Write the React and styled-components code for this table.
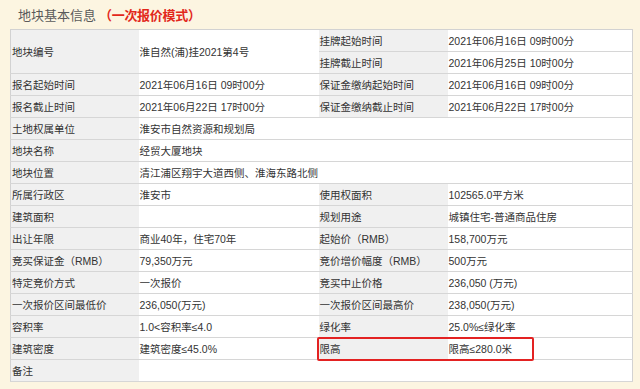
import styled, { createGlobalStyle } from "styled-components";

const GlobalStyle = createGlobalStyle`
  html, body {
    margin: 0;
    padding: 0;
    background: #fcf5e1;
  }
  body {
    font-family: "Liberation Sans", "Noto Sans CJK SC", sans-serif;
    color: #333;
  }
`;

const StyledPage = styled.div`
  width: 640px;
  height: 389px;
  padding: 0 0 0 10px;
  box-sizing: border-box;
  overflow: hidden;
`;

const StyledTitle = styled.h2`
  margin: 0;
  height: 29px;
  padding-left: 8px;
  display: flex;
  align-items: center;
  font-size: 13px;
  font-weight: 400;
  color: #5a5a5a;
  font-family: "Noto Sans CJK SC", sans-serif;
`;

const StyledMode = styled.span`
  margin-left: 3px;
  color: #e2281b;
  font-weight: 700;
  letter-spacing: -0.3px;
`;

const StyledTableWrap = styled.div`
  position: relative;
  width: 622px;
`;

const StyledTable = styled.table`
  width: 622px;
  table-layout: fixed;
  border-collapse: collapse;
  background: #fff;
  border: 1px solid #d2d2d2;
  font-size: 10.5px;
`;

const StyledCol = styled.col`
  width: ${(props) => props.$width}px;
`;

const StyledCell = styled.td`
  height: 21px;
  padding: 0 0 0 1px;
  border-bottom: 1px solid #d6d6d6;
  white-space: nowrap;
  overflow: visible;
  vertical-align: middle;
  background: ${(props) => (props.$label ? "#f0f0f0" : "#fff")};
  color: #333;
`;

const StyledHighlight = styled.div`
  position: absolute;
  left: 307px;
  top: 308px;
  width: 213px;
  height: 20px;
  border: 2px solid #e32222;
  border-radius: 2px;
  pointer-events: none;
`;

const columns = [128, 180, 129, 185];

const rows = [
  [["地块编号", true, 1, 2], ["淮自然(浦)挂2021第4号", false, 1, 2], ["挂牌起始时间", true], ["2021年06月16日 09时00分"]],
  [["挂牌截止时间", true], ["2021年06月25日 10时00分"]],
  [["报名起始时间", true], ["2021年06月16日 09时00分"], ["保证金缴纳起始时间", true], ["2021年06月16日 09时00分"]],
  [["报名截止时间", true], ["2021年06月22日 17时00分"], ["保证金缴纳截止时间", true], ["2021年06月22日 17时00分"]],
  [["土地权属单位", true], ["淮安市自然资源和规划局", false, 3]],
  [["地块名称", true], ["经贸大厦地块", false, 3]],
  [["地块位置", true], ["清江浦区翔宇大道西侧、淮海东路北侧", false, 3]],
  [["所属行政区", true], ["淮安市"], ["使用权面积", true], ["102565.0平方米"]],
  [["建筑面积", true], [""], ["规划用途", true], ["城镇住宅-普通商品住房"]],
  [["出让年限", true], ["商业40年，住宅70年"], ["起始价（RMB）", true], ["158,700万元"]],
  [["竞买保证金（RMB）", true], ["79,350万元"], ["竞价增价幅度（RMB）", true], ["500万元"]],
  [["特定竞价方式", true], ["一次报价"], ["竞买中止价格", true], ["236,050 (万元)"]],
  [["一次报价区间最低价", true], ["236,050(万元)"], ["一次报价区间最高价", true], ["238,050(万元)"]],
  [["容积率", true], ["1.0<容积率≤4.0"], ["绿化率", true], ["25.0%≤绿化率"]],
  [["建筑密度", true], ["建筑密度≤45.0%"], ["限高", true], ["限高≤280.0米"]],
  [["备注", true], ["", false, 3]],
];

function App() {
  return (
    <StyledPage>
      <GlobalStyle />
      <StyledTitle>
        地块基本信息<StyledMode>（一次报价模式）</StyledMode>
      </StyledTitle>

      <StyledTableWrap>
        <StyledTable>
          <colgroup>
            {columns.map((width, i) => (
              <StyledCol key={i} $width={width} />
            ))}
          </colgroup>
          <tbody>
            {rows.map((cells, i) => (
              <tr key={i}>
                {cells.map(([text, label, colSpan = 1, rowSpan = 1], j) => (
                  <StyledCell
                    key={j}
                    $label={label}
                    colSpan={colSpan}
                    rowSpan={rowSpan}
                  >
                    {text}
                  </StyledCell>
                ))}
              </tr>
            ))}
          </tbody>
        </StyledTable>
        <StyledHighlight />
      </StyledTableWrap>
    </StyledPage>
  );
}

export default App;
